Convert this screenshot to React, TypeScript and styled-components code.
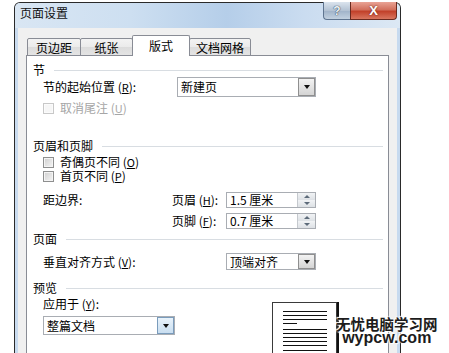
import React from "react";
import styled, { createGlobalStyle } from "styled-components";

const GlobalStyle = createGlobalStyle`
  html, body {
    margin: 0;
    padding: 0;
    background: #fff;
    overflow: hidden;
  }
  body {
    font-family: "Noto Sans CJK SC", "Noto Sans", sans-serif;
    font-size: 12px;
    color: #000;
  }
`;

const Page = styled.div`
  position: relative;
  width: 449px;
  height: 353px;
  overflow: hidden;
  box-sizing: border-box;
  padding: 2px 0 0 14px;
`;

const Window = styled.div`
  width: 387px;
  height: 400px;
  box-sizing: border-box;
  border: 1px solid #2a2a2a;
  border-bottom: none;
  border-radius: 6px 6px 0 0;
  background: linear-gradient(90deg, #c9dbef 0%, #bcd2eb 50%, #c7daef 100%);
  display: flex;
  flex-direction: column;
`;

const TitleBar = styled.div`
  height: 25px;
  flex: none;
  display: flex;
  justify-content: space-between;
  align-items: flex-start;
  border-radius: 5px 5px 0 0;
  background: linear-gradient(
    90deg,
    #d9e6f3 0%,
    #cddff1 30%,
    #b5cee9 55%,
    #cadcf0 75%,
    #dce8f4 100%
  );
`;

const Title = styled.div`
  padding: 4px 0 0 5px;
  line-height: 12px;
  font-size: 12px;
  color: #111;
`;

const Controls = styled.div`
  display: flex;
  margin: -1px 3px 0 0;
`;

const HelpButton = styled.div`
  width: 27px;
  height: 18px;
  box-sizing: border-box;
  border: 1px solid #5f7590;
  border-top: none;
  border-right: none;
  border-radius: 0 0 0 4px;
  background: linear-gradient(#dbe4ee, #b3c2d3 50%, #9fb2c8 51%, #c2d1e0);
  display: flex;
  align-items: center;
  justify-content: center;
  font-family: "Liberation Sans", sans-serif;
  font-weight: bold;
  font-size: 12px;
  color: #eef3f8;
  text-shadow: 0 0 1px #2d3e52, 0 0 1px #2d3e52;
`;

const CloseButton = styled.div`
  width: 47px;
  height: 18px;
  box-sizing: border-box;
  border: 1px solid #6a2a1f;
  border-top: none;
  border-radius: 0 0 4px 0;
  background: linear-gradient(#e9a395, #d2705d 45%, #c2412a 55%, #d9765f);
  display: flex;
  align-items: center;
  justify-content: center;
  font-family: "Liberation Sans", sans-serif;
  font-weight: bold;
  font-size: 13px;
  color: #fff;
  text-shadow: 0 0 2px #5a1a10;
`;

const Client = styled.div`
  flex: 1;
  margin: 0 3px;
  background: #f0f0f0;
  padding: 7px 8px 0 8px;
  display: flex;
  flex-direction: column;
`;

const TabStrip = styled.div`
  height: 21px;
  flex: none;
  display: flex;
  align-items: flex-end;
  padding-left: 1px;
  margin-bottom: -1px;
  position: relative;
  z-index: 1;
`;

const Tab = styled.div<{ $w: number; $active?: boolean }>`
  width: ${(p) => p.$w}px;
  height: ${(p) => (p.$active ? 21 : 18)}px;
  box-sizing: border-box;
  margin-right: -1px;
  border: 1px solid #898c95;
  border-bottom: ${(p) => (p.$active ? "none" : "1px solid #898c95")};
  border-radius: 2px 2px 0 0;
  background: ${(p) =>
    p.$active
      ? "#fff"
      : "linear-gradient(#f3f3f3, #ebebeb 50%, #dcdcdc 51%, #e4e4e4)"};
  display: flex;
  justify-content: center;
  padding-top: ${(p) => (p.$active ? 4 : 3)}px;
  line-height: 12px;
  font-size: 12px;
  position: relative;
  z-index: ${(p) => (p.$active ? 2 : 1)};
`;

const Panel = styled.div`
  flex: 1;
  background: #fff;
  border: 1px solid #898c95;
  padding: 8px 5px 0 6px;
  display: flex;
  flex-direction: column;
`;

const Header = styled.div<{ $mt?: number }>`
  margin-top: ${(p) => p.$mt ?? 0}px;
  height: 12px;
  line-height: 12px;
  display: flex;
  align-items: center;
  gap: 9px;
  &::after {
    content: "";
    flex: 1;
    height: 1px;
    background: #d8dde2;
  }
`;

const Row = styled.div<{ $mt?: number; $h?: number }>`
  margin: ${(p) => p.$mt ?? 0}px 0 0 10px;
  height: ${(p) => p.$h ?? 12}px;
  display: flex;
  align-items: center;
`;

const Label = styled.span<{ $w?: number; $disabled?: boolean }>`
  flex: none;
  width: ${(p) => (p.$w ? `${p.$w}px` : "auto")};
  line-height: 12px;
  white-space: nowrap;
  color: ${(p) => (p.$disabled ? "#a6a6a6" : "#000")};
`;

const Key = styled.u`
  font-size: 11px;
`;

const Check = styled.span<{ $disabled?: boolean }>`
  flex: none;
  width: 11px;
  height: 11px;
  box-sizing: border-box;
  margin-right: 6px;
  border: 1px solid ${(p) => (p.$disabled ? "#c8c8c8" : "#8e8f8f")};
  background: ${(p) =>
    p.$disabled
      ? "#f6f6f6"
      : "linear-gradient(135deg, #cfcfcf, #e6e6e6 60%, #f4f4f4)"};
  box-shadow: inset 0 0 0 1px ${(p) => (p.$disabled ? "#fbfbfb" : "#f4f4f4")};
`;

const SelectBox = styled.div<{ $w: number; $h: number }>`
  flex: none;
  width: ${(p) => p.$w}px;
  height: ${(p) => p.$h}px;
  box-sizing: border-box;
  border: 1px solid #a9adb3;
  background: #fff;
  display: flex;
  align-items: center;
  justify-content: space-between;
  padding-left: 3px;
  line-height: 12px;
  white-space: nowrap;
`;

const DropButton = styled.span<{ $hot?: boolean }>`
  flex: none;
  width: 17px;
  height: 100%;
  box-sizing: border-box;
  border: 1px solid ${(p) => (p.$hot ? "#7a9cbc" : "#8f8f8f")};
  background: ${(p) =>
    p.$hot
      ? "linear-gradient(#e9f3fb, #c9def0)"
      : "linear-gradient(#f3f3f3, #d4d4d4)"};
  display: flex;
  align-items: center;
  justify-content: center;
  &::after {
    content: "";
    border-left: 3.5px solid transparent;
    border-right: 3.5px solid transparent;
    border-top: 4px solid #111;
  }
`;

const Spin = styled.span`
  flex: none;
  width: 17px;
  height: 100%;
  display: flex;
  flex-direction: column;
  border-left: 1px solid #c5c9ce;
`;

const SpinHalf = styled.span<{ $up?: boolean }>`
  flex: 1;
  background: linear-gradient(#f1f3f5, #dde1e5);
  display: flex;
  align-items: center;
  justify-content: center;
  &::after {
    content: "";
    border-left: 3px solid transparent;
    border-right: 3px solid transparent;
    ${(p) =>
      p.$up ? "border-bottom: 3px solid #5d6b7a;" : "border-top: 3px solid #5d6b7a;"}
  }
`;

const MarginGrid = styled.div`
  margin: 10px 0 0 10px;
  display: grid;
  grid-template-columns: 129px 54px 90px;
  grid-auto-rows: 16px;
  row-gap: 5px;
  align-items: center;
`;

const PreviewBody = styled.div`
  margin: 4px 0 0 10px;
  display: flex;
  align-items: flex-start;
`;

const PreviewLeft = styled.div`
  width: 229px;
  flex: none;
  display: flex;
  flex-direction: column;
  gap: 6px;
`;

const PreviewPage = styled.div`
  margin-top: 4px;
  width: 65px;
  height: 60px;
  box-sizing: border-box;
  border: 1px solid #3a3a3a;
  background: #fff;
  box-shadow: 2px 0 0 #111;
`;

const Watermark = styled.div`
  position: absolute;
  left: 336px;
  top: 316px;
  display: flex;
  flex-direction: column;
  align-items: center;
  color: #1c1c1c;
  font-weight: bold;
  text-shadow: 0 0 2px #fff, 1px 1px 1px #fff, -1px -1px 1px #fff;
`;

const MarkCn = styled.div`
  font-family: "Noto Sans CJK SC", sans-serif;
  font-size: 14.5px;
  line-height: 15px;
  letter-spacing: 0px;
`;

const MarkEn = styled.div`
  font-family: "Liberation Sans", Arial, sans-serif;
  font-size: 16px;
  line-height: 13px;
`;

const tabs = [
  { label: "页边距", w: 54 },
  { label: "纸张", w: 53 },
  { label: "版式", w: 58, active: true },
  { label: "文档网格", w: 62 },
];

const lineRows = [
  { y: 8.5, x2: 54 },
  { y: 12.5, x2: 54 },
  { y: 16.5, x2: 54 },
  { y: 20.5, x2: 24 },
  { y: 26.5, x2: 54 },
  { y: 30.5, x2: 54 },
  { y: 34.5, x2: 54 },
  { y: 38.5, x2: 54 },
  { y: 42.5, x2: 54 },
  { y: 47.5, x2: 54 },
];

const PageLines = () => (
  <svg width="63" height="58" viewBox="0 0 63 58">
    {lineRows.map((l) => (
      <line key={l.y} x1="10" x2={l.x2} y1={l.y} y2={l.y} stroke="#111" strokeWidth="1" />
    ))}
  </svg>
);

const Select = ({ w, h, text, hot }: { w: number; h: number; text: string; hot?: boolean }) => (
  <SelectBox $w={w} $h={h}>
    {text}
    <DropButton $hot={hot} />
  </SelectBox>
);

const SpinInput = ({ text }: { text: string }) => (
  <SelectBox $w={90} $h={16}>
    {text}
    <Spin>
      <SpinHalf $up />
      <SpinHalf />
    </Spin>
  </SelectBox>
);

const App = () => {
  return (
    <>
      <GlobalStyle />
      <Page>
        <Window>
          <TitleBar>
            <Title>页面设置</Title>
            <Controls>
              <HelpButton>?</HelpButton>
              <CloseButton>X</CloseButton>
            </Controls>
          </TitleBar>
          <Client>
            <TabStrip>
              {tabs.map((t) => (
                <Tab key={t.label} $w={t.w} $active={t.active}>
                  {t.label}
                </Tab>
              ))}
            </TabStrip>
            <Panel>
              <Header>节</Header>
              <Row $mt={1} $h={20}>
                <Label $w={134}>
                  节的起始位置 (<Key>R</Key>):
                </Label>
                <Select w={139} h={20} text="新建页" />
              </Row>
              <Row $mt={5}>
                <Check $disabled />
                <Label $disabled>
                  取消尾注 (<Key>U</Key>)
                </Label>
              </Row>

              <Header $mt={26}>页眉和页脚</Header>
              <Row $mt={4}>
                <Check />
                <Label>
                  奇偶页不同 (<Key>O</Key>)
                </Label>
              </Row>
              <Row $mt={2}>
                <Check />
                <Label>
                  首页不同 (<Key>P</Key>)
                </Label>
              </Row>
              <MarginGrid>
                <Label>距边界:</Label>
                <Label>
                  页眉 (<Key>H</Key>):
                </Label>
                <SpinInput text="1.5 厘米" />
                <span />
                <Label>
                  页脚 (<Key>F</Key>):
                </Label>
                <SpinInput text="0.7 厘米" />
              </MarginGrid>

              <Header $mt={4}>页面</Header>
              <Row $mt={8} $h={17}>
                <Label $w={183}>
                  垂直对齐方式 (<Key>V</Key>):
                </Label>
                <Select w={90} h={17} text="顶端对齐" />
              </Row>

              <Header $mt={12}>预览</Header>
              <PreviewBody>
                <PreviewLeft>
                  <Label>
                    应用于 (<Key>Y</Key>):
                  </Label>
                  <Select w={132} h={19} text="整篇文档" hot />
                </PreviewLeft>
                <PreviewPage>
                  <PageLines />
                </PreviewPage>
              </PreviewBody>
            </Panel>
          </Client>
        </Window>
        <Watermark>
          <MarkCn>无忧电脑学习网</MarkCn>
          <MarkEn>wypcw.com</MarkEn>
        </Watermark>
      </Page>
    </>
  );
};

export default App;
